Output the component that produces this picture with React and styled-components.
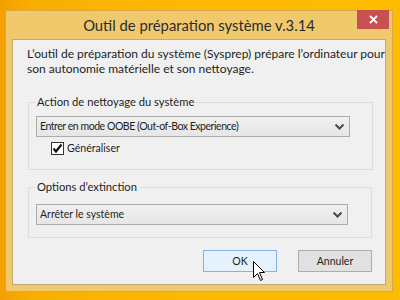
import React from 'react';
import styled, { createGlobalStyle } from 'styled-components';

const GlobalStyle = createGlobalStyle`
  html, body {
    margin: 0;
    padding: 0;
  }

  body {
    width: 400px;
    height: 300px;
    overflow: hidden;
    font-family: Lato, "Liberation Sans", sans-serif;
    color: #1e1e1e;
  }
`;

const Desktop = styled.div`
  position: relative;
  width: 400px;
  height: 300px;
  box-sizing: border-box;
  padding: 10px 7px 8px 5px;
  background: linear-gradient(90deg, #f3a000 0%, #f8ae00 8%, #fbb800 40%, #fcbd00 100%);
`;

const Window = styled.div`
  position: relative;
  height: 100%;
  box-sizing: border-box;
  border: 1px solid #dca64a;
  background: #f1c96d;
  display: flex;
  flex-direction: column;
`;

const TitleBar = styled.div`
  height: 28px;
  display: flex;
  align-items: center;
  justify-content: center;
  font-size: 14.8px;
  color: #2b2b2b;
  padding-bottom: 1px;
  box-sizing: border-box;
`;

const CloseButton = styled.div`
  position: absolute;
  top: -1px;
  right: 3px;
  width: 32px;
  height: 19px;
  background: #c75050;
  display: flex;
  align-items: center;
  justify-content: center;
`;

const Client = styled.div`
  flex: 1;
  margin: 0 6px 6px;
  border: 1px solid #c3a873;
  background: #f0f0f0;
  padding: 6px 12px 0 15px;
  font-size: 12px;
  line-height: 15px;
  white-space: nowrap;
`;

const Intro = styled.p`
  margin: 0 0 18px -1px;
  color: #1e1e1e;
`;

const Group = styled.fieldset`
  margin: ${({ $top }) => $top || 0}px ${({ $right }) => $right || 0}px 0 0;
  padding: ${({ $padTop }) => $padTop}px ${({ $padRight }) => $padRight}px ${({ $padBottom }) => $padBottom}px 7px;
  border: 1px solid #dcdcdc;
  min-width: 0;
`;

const Legend = styled.legend`
  padding: 0 2px;
  margin-left: -1px;
  line-height: 16px;
  font-size: 11.2px;
  color: #1e1e1e;
`;

const Combo = styled.div`
  height: 21px;
  box-sizing: border-box;
  border: 1px solid #acacac;
  background: linear-gradient(#f0f0f0, #e6e6e6);
  display: flex;
  align-items: center;
  justify-content: space-between;
  padding: 0 5px 0 3px;
  font-size: 10.5px;
  letter-spacing: ${({ $tracking }) => $tracking || 0}px;
  color: #1e1e1e;
`;

const CheckRow = styled.label`
  display: flex;
  align-items: center;
  gap: 3px;
  margin: 4px 0 0 15px;
  height: 15px;
  font-size: 10.6px;
`;

const Box = styled.span`
  width: 13px;
  height: 13px;
  box-sizing: border-box;
  border: 1px solid #333;
  background: #fff;
  display: flex;
  align-items: center;
  justify-content: center;
`;

const Buttons = styled.div`
  display: flex;
  justify-content: flex-end;
  gap: 21px;
  margin: 12px 1px 0 0;
`;

const Button = styled.div`
  width: 74px;
  height: 22px;
  box-sizing: border-box;
  border: 1px solid ${({ $primary }) => ($primary ? '#7eb4ea' : '#adadad')};
  background: ${({ $primary }) => ($primary ? '#e5f1fb' : '#e1e1e1')};
  display: flex;
  align-items: center;
  justify-content: center;
  font-size: 10.5px;
  color: #1e1e1e;
`;

const Cursor = styled.svg`
  position: absolute;
  left: 253px;
  top: 261px;
`;

const Chevron = () => (
  <svg width="9" height="6" viewBox="0 0 9 6">
    <path d="M0.5 0.5 L4.5 4.5 L8.5 0.5" fill="none" stroke="#4a4a4a" strokeWidth="2" />
  </svg>
);

const App = () => (
  <Desktop>
    <GlobalStyle />
    <Window>
      <TitleBar>Outil de préparation système v.3.14</TitleBar>
      <CloseButton>
        <svg width="9" height="9" viewBox="0 0 9 9">
          <path d="M1 1 L8 8 M8 1 L1 8" stroke="#fff" strokeWidth="1.8" />
        </svg>
      </CloseButton>
      <Client>
        <Intro>
          L’outil de préparation du système (Sysprep) prépare l’ordinateur pour
          <br />
          son autonomie matérielle et son nettoyage.
        </Intro>
        <Group $padTop={6} $padRight={22} $padBottom={13}>
          <Legend>Action de nettoyage du système</Legend>
          <Combo $tracking={-0.45}>
            <span>Entrer en mode OOBE (Out-of-Box Experience)</span>
            <Chevron />
          </Combo>
          <CheckRow>
            <Box>
              <svg width="11" height="11" viewBox="0 0 11 11">
                <path d="M1.5 5.5 L4 8.5 L9.5 1.5" fill="none" stroke="#111" strokeWidth="2.2" />
              </svg>
            </Box>
            Généraliser
          </CheckRow>
        </Group>
        <Group $top={9} $right={1} $padTop={9} $padRight={23} $padBottom={12}>
          <Legend>Options d’extinction</Legend>
          <Combo>
            <span>Arrêter le système</span>
            <Chevron />
          </Combo>
        </Group>
        <Buttons>
          <Button $primary>OK</Button>
          <Button>Annuler</Button>
        </Buttons>
      </Client>
    </Window>
    <Cursor width="13" height="21" viewBox="0 0 13 21">
      <path
        d="M0.5 0.5 L0.5 16.5 L4.5 12.5 L7.5 19.5 L9.5 18.5 L6.5 11.5 L11.5 11.5 Z"
        fill="#fff"
        stroke="#000"
        strokeWidth="1"
        strokeLinejoin="miter"
      />
    </Cursor>
  </Desktop>
);

export default App;
